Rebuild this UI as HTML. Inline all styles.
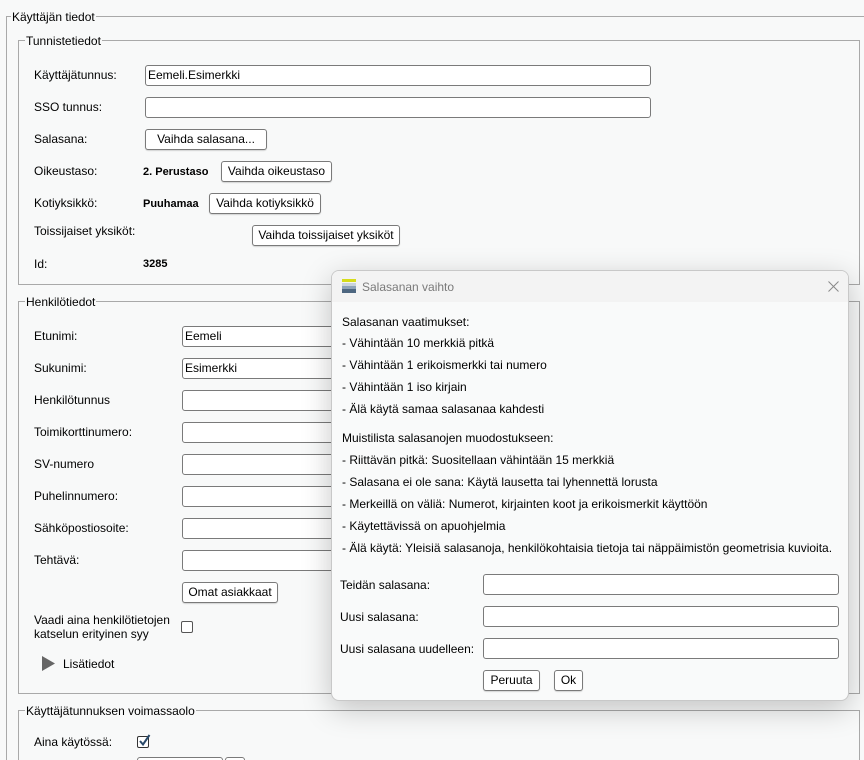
<!DOCTYPE html>
<html style="width:864px;height:760px;overflow:hidden"><head><meta charset="utf-8"><style>
*{box-sizing:border-box;margin:0;padding:0}
body{width:864px;height:760px;overflow:hidden;background:#f8f9f9;font-family:"Liberation Sans",sans-serif;font-size:12px;color:#000;position:relative}
.a{position:absolute;white-space:nowrap}
.t{position:absolute;white-space:nowrap;line-height:14px;transform:translateY(-7px)}
.box{position:absolute;border:1px solid #a9a9a9}
.lg{position:absolute;background:#f8f9f9;padding:0 1px;line-height:14px;white-space:nowrap}
.in{position:absolute;background:#fff;border:1px solid #7a7a7a;border-radius:3px;height:21px;padding-left:2px;line-height:19px}
.bt{position:absolute;background:#fff;border:1px solid #7a7a7a;border-radius:3px;height:21px;line-height:19px;text-align:center;box-shadow:0 1px 1px rgba(0,0,0,.15)}
.b{font-weight:bold;font-size:11px}
.cb{position:absolute;width:12px;height:12px;border:1px solid #333;border-radius:2px;background:#fff}
</style></head><body>
<div class="box" style="left:6px;top:16px;width:858px;height:744px;border-right:none;border-bottom:none"></div>
<div class="lg" style="left:11px;top:10px">Käyttäjän tiedot</div>

<div class="box" style="left:18px;top:40px;width:842px;height:245px"></div>
<div class="lg" style="left:25px;top:34px">Tunnistetiedot</div>
<div class="t" style="left:34px;top:75px">Käyttäjätunnus:</div>
<div class="in" style="left:145px;top:65px;width:506px">Eemeli.Esimerkki</div>
<div class="t" style="left:34px;top:107px">SSO tunnus:</div>
<div class="in" style="left:145px;top:97px;width:506px"></div>
<div class="t" style="left:34px;top:139px">Salasana:</div>
<div class="bt" style="left:145px;top:129px;width:122px">Vaihda salasana...</div>
<div class="t" style="left:34px;top:171px">Oikeustaso:</div>
<div class="t b" style="left:143px;top:172px">2. Perustaso</div>
<div class="bt" style="left:221px;top:161px;width:111px">Vaihda oikeustaso</div>
<div class="t" style="left:34px;top:203px">Kotiyksikkö:</div>
<div class="t b" style="left:143px;top:204px">Puuhamaa</div>
<div class="bt" style="left:209px;top:193px;width:112px">Vaihda kotiyksikkö</div>
<div class="t" style="left:34px;top:231px">Toissijaiset yksiköt:</div>
<div class="bt" style="left:252px;top:225px;width:148px">Vaihda toissijaiset yksiköt</div>
<div class="t" style="left:34px;top:264px">Id:</div>
<div class="t b" style="left:143px;top:264px">3285</div>

<div class="box" style="left:18px;top:301px;width:842px;height:393px"></div>
<div class="lg" style="left:25px;top:295px">Henkilötiedot</div>
<div class="t" style="left:34px;top:336px">Etunimi:</div><div class="in" style="left:182px;top:326px;width:300px">Eemeli</div>
<div class="t" style="left:34px;top:368px">Sukunimi:</div><div class="in" style="left:182px;top:358px;width:300px">Esimerkki</div>
<div class="t" style="left:34px;top:400px">Henkilötunnus</div><div class="in" style="left:182px;top:390px;width:300px"></div>
<div class="t" style="left:34px;top:432px">Toimikorttinumero:</div><div class="in" style="left:182px;top:422px;width:300px"></div>
<div class="t" style="left:34px;top:464px">SV-numero</div><div class="in" style="left:182px;top:454px;width:300px"></div>
<div class="t" style="left:34px;top:496px">Puhelinnumero:</div><div class="in" style="left:182px;top:486px;width:300px"></div>
<div class="t" style="left:34px;top:528px">Sähköpostiosoite:</div><div class="in" style="left:182px;top:518px;width:300px"></div>
<div class="t" style="left:34px;top:560px">Tehtävä:</div><div class="in" style="left:182px;top:550px;width:300px"></div>
<div class="bt" style="left:182px;top:582px;width:96px">Omat asiakkaat</div>
<div class="t" style="left:34px;top:620px">Vaadi aina henkilötietojen</div>
<div class="t" style="left:34px;top:634px">katselun erityinen syy</div>
<div class="cb" style="left:181px;top:621px;border-color:#555"></div>
<svg class="a" style="left:42px;top:656px" width="14" height="15"><path d="M0 0L13 7.5L0 15Z" fill="#666"/></svg>
<div class="t" style="left:63px;top:664px">Lisätiedot</div>

<div class="box" style="left:18px;top:710px;width:842px;height:60px;border-bottom:none"></div>
<div class="lg" style="left:25px;top:704px">Käyttäjätunnuksen voimassaolo</div>
<div class="t" style="left:34px;top:742px">Aina käytössä:</div>
<div class="cb" style="left:137px;top:736px"></div>
<svg class="a" style="left:137px;top:733px" width="14" height="15"><path d="M3 8L6 11.5L12.5 2" stroke="#2a4a6a" stroke-width="2" fill="none"/></svg>
<div class="in" style="left:137px;top:757px;width:86px"></div>
<div class="bt" style="left:225px;top:757px;width:20px"></div>

<div class="a" style="left:331px;top:270px;width:518px;height:431px;background:#f9fafa;border:1px solid #c8c8c8;border-radius:8px;box-shadow:0 8px 30px rgba(0,0,0,.22);overflow:hidden">
 <div style="position:absolute;left:0;top:0;width:100%;height:31px;background:#f3f3f3"></div>
 <svg class="a" style="left:10px;top:8px" width="14" height="14"><rect x="0" y="0" width="14" height="3" fill="#d6dc1c"/><rect x="0" y="4" width="14" height="3" fill="#c9d3dc"/><rect x="0" y="7" width="14" height="3" fill="#8ea3b8"/><rect x="0" y="10" width="14" height="4" fill="#4d6680"/></svg>
 <div class="t" style="left:30px;top:16px;color:#7a7a7a">Salasanan vaihto</div>
 <svg class="a" style="left:496px;top:10px" width="11" height="11"><path d="M0.5 0.5L10.5 10.5M10.5 0.5L0.5 10.5" stroke="#888" stroke-width="1"/></svg>
 <div class="t" style="left:10px;top:51px">Salasanan vaatimukset:</div>
 <div class="t" style="left:10px;top:72px">- Vähintään 10 merkkiä pitkä</div>
 <div class="t" style="left:10px;top:94px">- Vähintään 1 erikoismerkki tai numero</div>
 <div class="t" style="left:10px;top:116px">- Vähintään 1 iso kirjain</div>
 <div class="t" style="left:10px;top:138px">- Älä käytä samaa salasanaa kahdesti</div>
 <div class="t" style="left:10px;top:167px">Muistilista salasanojen muodostukseen:</div>
 <div class="t" style="left:10px;top:189px">- Riittävän pitkä: Suositellaan vähintään 15 merkkiä</div>
 <div class="t" style="left:10px;top:211px">- Salasana ei ole sana: Käytä lausetta tai lyhennettä lorusta</div>
 <div class="t" style="left:10px;top:233px">- Merkeillä on väliä: Numerot, kirjainten koot ja erikoismerkit käyttöön</div>
 <div class="t" style="left:10px;top:255px">- Käytettävissä on apuohjelmia</div>
 <div class="t" style="left:10px;top:277px">- Älä käytä: Yleisiä salasanoja, henkilökohtaisia tietoja tai näppäimistön geometrisia kuvioita.</div>
 <div class="t" style="left:8px;top:314px">Teidän salasana:</div>
 <div class="t" style="left:8px;top:346px">Uusi salasana:</div>
 <div class="t" style="left:8px;top:378px">Uusi salasana uudelleen:</div>
 <div class="in" style="left:151px;top:303px;width:356px"></div>
 <div class="in" style="left:151px;top:335px;width:356px"></div>
 <div class="in" style="left:151px;top:367px;width:356px"></div>
 <div class="bt" style="left:151px;top:399px;width:57px">Peruuta</div>
 <div class="bt" style="left:222px;top:399px;width:29px">Ok</div>
</div>
</body></html>
